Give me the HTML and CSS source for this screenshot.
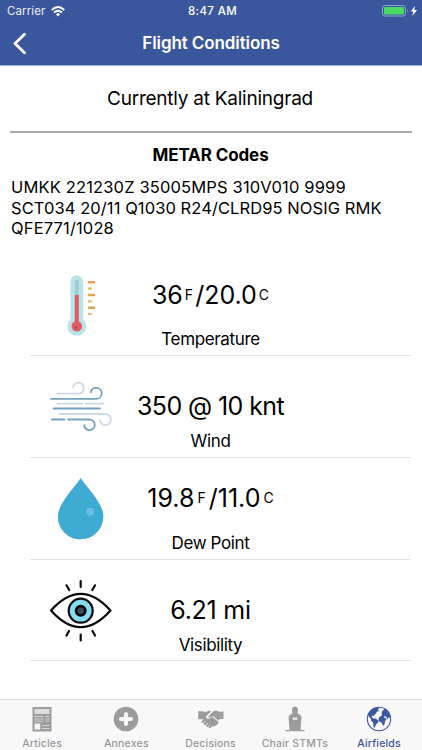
FILE: index.html
```html
<!DOCTYPE html>
<html lang="en">
<head>
<meta charset="utf-8">
<title>Flight Conditions</title>
<link rel="stylesheet" href="styles.css">
</head>
<body>
<header class="header">
  <div class="status">
    <div class="carrier"><span>Carrier</span>
      <svg width="14" height="11" viewBox="0 0 14 11" fill="none" stroke="#fff" stroke-width="1.9"><path d="M.7 4.1Q7-1.9 13.3 4.1M3 6.5Q7 2.9 11 6.5"/><path d="M4.9 8.2Q7 6.4 9.1 8.2L7 10.4Z" fill="#fff" stroke="none"/></svg>
    </div>
    <div class="clock">8:47 AM</div>
    <div class="battery">
      <svg width="36" height="12" viewBox="0 0 36 12"><rect x=".5" y=".5" width="23" height="10.5" rx="2.4" fill="none" stroke="#93a3cf"/><rect x="2" y="2" width="20" height="7.5" rx="1" fill="#4cd964"/><path d="M25 4q1.6 1.8 0 3.6z" fill="#93a3cf"/><path d="M33 .8 28.8 6.6h2.5L30.4 11l4.6-6h-2.7z" fill="#fff"/></svg>
    </div>
  </div>
  <div class="navbar">
    <svg class="back" width="14" height="22" viewBox="0 0 14 22" fill="none" stroke="#fff" stroke-width="2.8" stroke-linecap="round" stroke-linejoin="round"><path d="M12.5 1.3 3 10.500l9.500 9.200"/></svg>
    <h1 class="title">Flight Conditions</h1>
  </div>
</header>
<main class="content">
  <h2 class="place">Currently at Kaliningrad</h2>
  <h3 class="metar-title">METAR Codes</h3>
  <p class="metar">UMKK 221230Z 35005MPS 310V010 9999<br><span class="snug">SCT034 20/11 Q1030 R24/CLRD95 NOSIG RMK</span><br>QFE771/1028</p>
  <ul class="list">
    <li class="row tall">
      <svg class="pic" viewBox="40 254 90 102"><path d="M70.5 280.500a6.300 6.300 0 0 1 12.600 0v37.700a9.500 9.500 0 1 1-12.600 0z" fill="#b9e3e8"/><path d="M74.800 280.500a2 2 0 0 1 4 0V296h-4z" fill="#a0cdd3"/><path d="M74.800 294h4v26.400a5.300 5.300 0 1 1-4 0z" fill="#df5b60"/><circle cx="76" cy="326.500" r="1" fill="#a93d46"/><path d="M88 280h7v2.600h-7zM88 292.700h7v2.600h-7zM88 305.400h7v2.600h-7z" fill="#eda04e"/><path d="M88 286.500h3.700v2.200H88zM88 299.200h3.700v2.200H88zM88 311.900h3.700v2.200H88z" fill="#f0b661"/></svg>
      <div class="value temp">36<small>F</small>/20.0<small>C</small></div>
      <div class="label">Temperature</div>
    </li>
    <li class="row">
      <svg class="pic" viewBox="40 356 90 102" fill="none" stroke-linecap="round" stroke-width="1.800"><path stroke="#cfd9e6" d="M57.500 393.700H78a5.500 5.500 0 1 0-5-6.500M57.500 403.700h25M86 403.700h17.500M59.500 414H105a5.500 5.500 0 1 1-5 6.500"/><path stroke="#75a2bd" d="M51 398.800h45a5.500 5.500 0 1 0-5.200-6.500M53.500 408.500H100M52 419.500h12.500M68 419.500h21.500a5.300 5.300 0 1 1-5.300 5.600"/></svg>
      <div class="value wind">350 @ 10 knt</div>
      <div class="label low">Wind</div>
    </li>
    <li class="row tall">
      <svg class="pic" viewBox="40 458 90 102"><path d="M80.700 478C76 486 58 503 58 516.200a22.700 22.700 0 0 0 45.400 0C103.400 503 85.500 486 80.700 478z" fill="#3eabd3"/><path d="M58 514c0 30 38 32 44.600 8A22.700 22.700 0 0 1 58 514z" fill="#3799c5"/><circle cx="90.200" cy="511.800" r="4" fill="#65c0df"/></svg>
      <div class="value dew">19.8<small>F</small>/11.0<small>C</small></div>
      <div class="label low">Dew Point</div>
    </li>
    <li class="row">
      <svg class="pic" viewBox="40 559 90 102" fill="none" stroke="#080a0c" stroke-width="2.200" stroke-linecap="round" stroke-linejoin="round"><path d="M51 609.500Q80.700 576.300 110.500 609.500 80.700 642.800 51 609.500z"/><circle cx="80.700" cy="609.700" r="12" fill="#86dbed"/><circle cx="80.700" cy="609.700" r="4.600" fill="#3d4764" stroke-width="2.700"/><path d="M80.700 580v6M80.700 633.500v6M66.500 584.300l2.700 4.700M95 584.300l-2.700 4.700M69 630l-2.500 4.500M92.500 630l2.500 4.500"/></svg>
      <div class="value vis">6.21 mi</div>
      <div class="label low">Visibility</div>
    </li>
  </ul>
</main>
<nav class="tabs">
  <a class="tab"><svg viewBox="0 0 28 28"><path d="M4.500 2h19v24.500h-19z" fill="#9c9c9c"/><path d="M6.500 4h15v5h-15z" fill="#dedede"/><path d="M6.500 11.500h9M6.500 14h9M6.500 16.200h9M17.500 11.500h4M17.500 14h4M17.500 16.200h4M14 20.500h7.500M14 23.500h7.500" stroke="#e4e4e4" stroke-width=".8"/><path d="M6.500 18.500h5.700v6H6.500z" fill="#f8f8f8"/></svg><span>Articles</span></a>
  <a class="tab"><svg viewBox="0 0 28 28"><circle cx="14" cy="14" r="12.300" fill="#9c9c9c"/><path d="M14 9v10M9 14h10" stroke="#f8f8f8" stroke-width="4.200" stroke-linecap="round"/></svg><span>Annexes</span></a>
  <a class="tab"><svg viewBox="0 0 28 28" fill="#9c9c9c"><path d="M1.300 6.300H6l2.500 1 3.500-1.700 2.200.9-4.700 4.200q-.9 2.500 1.300 3 2.300.1 4.500-1.900l6.200 5.300q.6 1.500-1 1.700.2 1.500-1.600 1.300-.4 1.400-2 .7-.9 1.500-2.400.3L5.500 14.300H1.300z"/><path d="m11.500 11.300 4.700-4.700 2.300-1 4.200 1.200 3.800-.4v7.700h-3.800l-1.200 1.700-5.400-4.800q-2.300 1.900-4.600 1.300z"/><path d="m5.700 16.800.8-.8M7.900 18.800l1.200-1.200M10.300 20.700l1.200-1.200M12.800 22l.8-.8" stroke="#9c9c9c" stroke-width="2.400" stroke-linecap="round"/></svg><span>Decisions</span></a>
  <a class="tab"><svg viewBox="0 0 28 28" fill="#9c9c9c"><path d="M14 1.500C16.200 1.800 17 3 17 5L16.600 8.500 19.500 10 20.500 12.500 20 17 19.500 25.500H8.500L8 17 7.500 12.500 8.500 10 11.400 8.500 11 5C11 3 11.800 1.800 14 1.500zM4.500 25h19v1.300h-19z"/><path d="M11.700 12.500h4.600v2.300h-4.600z" fill="#f0f0f0"/></svg><span>Chair STMTs</span></a>
  <a class="tab active"><svg viewBox="0 0 28 28"><circle cx="14" cy="14" r="11.700" fill="#f8f8f8" stroke="#3b579d" stroke-width="1.100"/><path d="M3.200 9Q6 3.300 11 2.400l3 .6-1 1.700.9 1.600-2.200.5-.7 1.800-1.900 1.400.3 1.300-1.700-.7-1.200 1 1.600 1.800 2.200.1 3.400 2-.7 2.300-1.900 1.400-1.400 3.500-1-.2-.6-4.800-1.900-2.300-.6-2.200-2-1.700-.8-2.500zM16.700 8.300l.3-2 2-1.800.8-1q4.200 2.200 5.400 6.900l.3 3-1.800-1.400-1 2.300-1.700-2.700-2.200-.3.600 1.400 2.300 1.100-1.700 2.400-.3 2.700-1.800 2.200-1.300-3.700-2.400-.9-.8-2.600 1.400-2.300 1.900-.6z" fill="#3b579d"/></svg><span>Airfields</span></a>
</nav>
</body>
</html>
```
FILE: styles.css
```css
* { box-sizing: border-box; }
body {
  margin: 0;
  width: 422px;
  height: 750px;
  display: flex;
  flex-direction: column;
  overflow: hidden;
  background: #fff;
  color: #000;
  font-family: Inter, "Liberation Sans", sans-serif;
}
h1, h2, h3, p, ul { margin: 0; padding: 0; font-weight: 400; }
.header {
  height: 66px;
  background: #3a579d;
  border-bottom: 1px solid #a3afd0;
  color: #fff;
}
.status {
  height: 22px;
  display: grid;
  grid-template-columns: 1fr auto 1fr;
  align-items: center;
  padding: 0 4px 0 7px;
  font-size: 11.5px;
}
.carrier { display: flex; align-items: center; gap: 6px; letter-spacing: 0.1px; color: #e9edf6; }
.clock { font-weight: 500; letter-spacing: 0.35px; }
.battery { display: flex; justify-content: flex-end; }
.navbar {
  height: 43px;
  display: grid;
  grid-template-columns: 30px 1fr 30px;
  align-items: center;
  padding: 0 12px;
}
.title { text-align: center; font-size: 17px; font-weight: 600; line-height: 43px; letter-spacing: -0.1px; }
.content { flex: 1; padding: 0 10px; }
.place {
  height: 67px;
  border-bottom: 2px solid #aaa;
  padding-right: 2px;
  text-align: center;
  font-size: 19px;
  line-height: 65px;
  letter-spacing: -0.24px;
}
.metar-title {
  padding-right: 1px;
  text-align: center;
  font-size: 17px;
  font-weight: 700;
  line-height: 44px;
  height: 43px;
  letter-spacing: -0.1px;
}
.metar {
  font-size: 16.5px;
  line-height: 20.5px;
  padding: 1px 0 0 1px;
  white-space: nowrap;
  letter-spacing: 0.15px;
}
.snug { letter-spacing: 0.08px; }
.list { list-style: none; margin: 16px 1px 0 20px; }
.row {
  height: 101.7px;
  border-bottom: 1px solid #e4e4e6;
  display: grid;
  grid-template-columns: 90px 1fr 90px;
  grid-template-rows: 66px 1fr;
  padding-right: 20px;
}
.pic { grid-row: 1 / 3; width: 90px; height: 102px; margin-left: 10px; }
.value { font-size: 25px; line-height: 32px; align-self: end; text-align: center; white-space: nowrap; }
.tall .value { padding-bottom: 10px; }
.value small { font-size: 14px; vertical-align: 4px; margin: 0 2px; }
.value small:last-child { margin-right: 0; }
.dew small { margin: 0 3px; }
.wind { letter-spacing: -0.6px; }
.vis { letter-spacing: -0.25px; }
.label { grid-column: 2; text-align: center; font-size: 17px; line-height: 37px; letter-spacing: -0.36px; }
.low { line-height: 39px; }
.tabs {
  height: 51px;
  display: grid;
  grid-template-columns: repeat(5, 1fr);
  padding-right: 0.8px;
  background: #f8f8f8;
  border-top: 1px solid #dcdcde;
}
.tab {
  display: flex;
  flex-direction: column;
  align-items: center;
  padding-top: 5px;
  color: #989898;
  font-size: 10.5px;
  font-weight: 500;
  line-height: 13px;
  letter-spacing: 0.18px;
  white-space: nowrap;
}
.tab svg { width: 28px; height: 28px; margin-bottom: 4px; }
.tab.active { color: #3b579d; }
```
